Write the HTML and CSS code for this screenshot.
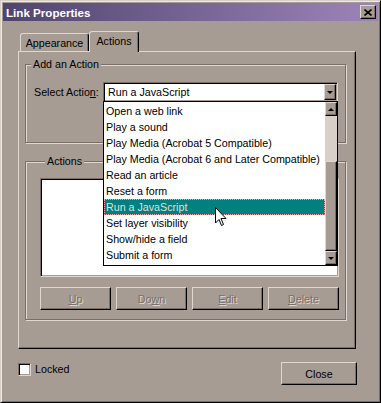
FILE: index.html
```html
<!DOCTYPE html>
<html lang="en">
<head>
  <meta charset="UTF-8" />
  <title>Link Properties</title>
  <link rel="stylesheet" href="styles.css">
</head>
<body>
  <div class="window">
    <div class="titlebar">
      <span class="title">Link Properties</span>
      <span class="title-close">
        <svg width="8" height="7" viewBox="0 0 8 7"><path d="M0.5 0.5 L7.5 6.5 M7.5 0.5 L0.5 6.5" stroke="#000" stroke-width="1.6" fill="none"/></svg>
      </span>
    </div>

    <div class="content">
      <div class="tabs">
        <div class="tab">Appearance</div>
        <div class="tab active">Actions</div>
      </div>

      <div class="panel">
        <fieldset class="group group-add">
          <legend>Add an Action</legend>
          <div class="select-row">
            <span class="select-label">Select Actio<u>n</u>:</span>
            <div class="combo">
              <span class="combo-value">Run a JavaScript</span>
              <span class="combo-btn"><i class="arrow-down"></i></span>

              <!-- open dropdown -->
              <div class="dropdown">
                <ul class="options">
                  <li>Open a web link</li>
                  <li>Play a sound</li>
                  <li>Play Media (Acrobat 5 Compatible)</li>
                  <li>Play Media (Acrobat 6 and Later Compatible)</li>
                  <li>Read an article</li>
                  <li>Reset a form</li>
                  <li class="selected">Run a JavaScript</li>
                  <li>Set layer visibility</li>
                  <li>Show/hide a field</li>
                  <li>Submit a form</li>
                </ul>
                <div class="scrollbar">
                  <span class="sb-btn"><i class="arrow-up"></i></span>
                  <span class="sb-track"></span>
                  <span class="sb-thumb"></span>
                  <span class="sb-btn"><i class="arrow-down"></i></span>
                </div>
              </div>
            </div>
          </div>
        </fieldset>

        <fieldset class="group group-actions">
          <legend>Actions</legend>
          <div class="listbox"></div>
          <div class="btn-row">
            <button class="btn" disabled><u>U</u>p</button>
            <button class="btn" disabled>Do<u>w</u>n</button>
            <button class="btn" disabled><u>E</u>dit</button>
            <button class="btn" disabled><u>D</u>elete</button>
          </div>
        </fieldset>
      </div>

      <div class="footer">
        <label class="check"><span class="check-box"></span>Locked</label>
        <button class="btn btn-close">Close</button>
      </div>
    </div>

    <!-- mouse pointer -->
    <svg class="cursor" width="12" height="20" viewBox="0 0 12 20">
      <path d="M0.5 0.5 L0.5 16 L4 12.5 L6.5 18.5 L8.5 17.5 L6 11.5 L11 11.5 Z" fill="#fff" stroke="#000" stroke-width="1"/>
    </svg>
  </div>
</body>
</html>
```

FILE: styles.css
```css
* {
  box-sizing: border-box;
}
body {
  margin: 0;
  background: #a79c94;
  font-family: "Liberation Sans", Arial, sans-serif;
  font-size: 10.7px;
  color: #000;
}
.window {
  position: relative;
  width: 381px;
  height: 403px;
  display: flex;
  flex-direction: column;
  background: #a79c94;
  border: 1px solid;
  border-color: #d8d0c8 #000 #000 #d8d0c8;
  padding: 2px;
  box-shadow: inset 1px 1px 0 #f0e8e0, inset -1px -1px 0 #7a6e66;
}

/* title bar */
.titlebar {
  height: 18px;
  display: flex;
  align-items: center;
  justify-content: space-between;
  padding: 0 2px 0 3px;
  background: linear-gradient(to right, #4f446f, #9d84b8);
  color: #fff;
  font-weight: bold;
  font-size: 11.6px;
}
.title-close {
  width: 16px;
  height: 14px;
  display: flex;
  align-items: center;
  justify-content: center;
  background: #a79c94;
  border: 1px solid;
  border-color: #e0d8d0 #000 #000 #e0d8d0;
  box-shadow: inset -1px -1px 0 #7a6e66;
}

.content {
  flex: 1;
  padding: 10px 0 0 15px;
}

/* tabs */
.tabs {
  display: flex;
  align-items: flex-end;
  height: 20px;
  padding-left: 2px;
}
.tab {
  height: 18px;
  padding-top: 2px;
  line-height: 14px;
  text-align: center;
  border: 1px solid;
  border-bottom: none;
  border-color: #e0d8d0 #000 transparent #e0d8d0;
  border-radius: 3px 3px 0 0;
  box-shadow: inset -1px 0 0 #7a6e66;
  background: #a79c94;
  width: 69px;
}
.tab.active {
  position: relative;
  z-index: 1;
  width: 50px;
  height: 21px;
  margin-bottom: -1px;
}

.panel {
  width: 338px;
  height: 298px;
  border: 1px solid;
  border-color: #e0d8d0 #000 #000 #e0d8d0;
  box-shadow: inset -1px -1px 0 #7a6e66;
  padding: 6px 9px 0 6px;
}

/* group boxes */
.group {
  margin: 0;
  padding: 0;
  min-width: 0;
  border: 1px solid #7a6e66;
  box-shadow: 1px 1px 0 #e0d8d0, inset 1px 1px 0 #e0d8d0;
}
.group legend {
  margin-left: 5px;
  padding: 0 2px;
  line-height: 12px;
  background: #a79c94;
}
.group-add {
  height: 85px;
}
.group-actions {
  margin-top: 12px;
  height: 165px;
  padding-left: 14px;
}

.select-row {
  display: flex;
  align-items: center;
  justify-content: space-between;
  margin-top: 12px;
  padding: 0 7px 0 8px;
}
.combo {
  position: relative;
  width: 235px;
  height: 20px;
  display: flex;
  border: 1px solid;
  border-color: #7a6e66 #e0d8d0 #e0d8d0 #7a6e66;
  padding: 1px;
  box-shadow: inset 1px 1px 0 #000, inset -1px -1px 0 #a79c94;
}
.combo-value {
  flex: 1;
  background: #fff;
  padding-left: 3px;
  line-height: 16px;
}
.combo-btn,
.sb-btn {
  width: 12px;
  display: flex;
  align-items: center;
  justify-content: center;
  background: #a79c94;
  border: 1px solid;
  border-color: #e0d8d0 #000 #000 #e0d8d0;
  box-shadow: inset -1px -1px 0 #7a6e66;
}
.arrow-down,
.arrow-up {
  width: 0;
  height: 0;
  border-left: 3px solid transparent;
  border-right: 3px solid transparent;
}
.arrow-down {
  border-top: 3px solid #000;
}
.arrow-up {
  border-bottom: 3px solid #000;
}

/* open dropdown list */
.dropdown {
  position: absolute;
  top: 100%;
  left: -1px;
  width: 235px;
  height: 165px;
  display: flex;
  background: #fff;
  border: 1px solid #000;
  z-index: 5;
}
.options {
  flex: 1;
  list-style: none;
  margin: 0;
  padding: 1px 0 0;
}
.options li {
  height: 16px;
  line-height: 17px;
  padding-left: 2px;
  white-space: nowrap;
}
.options li.selected {
  background: #008080;
  color: #e8dcdc;
  outline: 1px dotted #f0a8a0;
  outline-offset: -1px;
}
.scrollbar {
  width: 12px;
  display: flex;
  flex-direction: column;
}
.sb-btn {
  height: 14px;
}
.sb-track {
  height: 45px;
  background: #d8d0c8;
}
.sb-thumb {
  height: 90px;
  background: #a79c94;
  border: 1px solid;
  border-color: #e0d8d0 #000 #000 #e0d8d0;
  box-shadow: inset -1px -1px 0 #7a6e66;
}

.listbox {
  margin-top: 11px;
  width: 299px;
  height: 99px;
  background: #fff;
  border: 1px solid;
  border-color: #7a6e66 #e0d8d0 #e0d8d0 #7a6e66;
  box-shadow: inset 1px 1px 0 #000, inset -1px -1px 0 #a79c94;
}

/* buttons */
.btn-row {
  display: flex;
  gap: 5px;
  width: 299px;
  margin-top: 10px;
}
.btn {
  height: 23px;
  padding: 0;
  font-family: inherit;
  font-size: 10.7px;
  color: #000;
  background: #a79c94;
  border: 1px solid;
  border-color: #e0d8d0 #000 #000 #e0d8d0;
  box-shadow: inset -1px -1px 0 #7a6e66;
}
.btn-row .btn {
  flex: 1;
}
.btn:disabled {
  color: #7a6e66;
  text-shadow: 1px 1px 0 #e0d8d0;
}

.footer {
  display: flex;
  justify-content: space-between;
  align-items: flex-start;
  width: 339px;
  padding-top: 13px;
}
.check {
  display: flex;
  align-items: center;
  gap: 4px;
  margin-top: 1px;
  line-height: 13px;
}
.check-box {
  width: 13px;
  height: 13px;
  background: #fff;
  border: 1px solid;
  border-color: #7a6e66 #e0d8d0 #e0d8d0 #7a6e66;
  box-shadow: inset 1px 1px 0 #000, inset -1px -1px 0 #a79c94;
}
.btn-close {
  width: 76px;
}

.cursor {
  position: absolute;
  left: 214px;
  top: 206px;
  z-index: 10;
}
```
